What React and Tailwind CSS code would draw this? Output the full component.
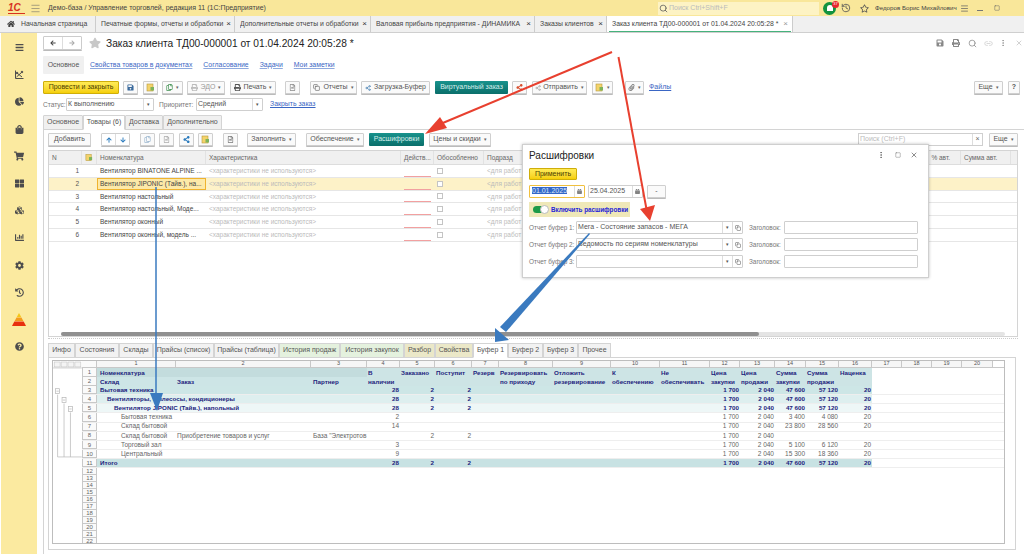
import React from "react";
import {
  FaBars, FaChartPie, FaShoppingBag, FaShoppingCart, FaThLarge, FaCubes, FaChartBar, FaCog, FaHistory,
  FaQuestionCircle, FaHome, FaStar, FaRegStar, FaPrint, FaSave, FaCalendarAlt, FaPaperclip, FaArrowUp, FaArrowDown,
  FaArrowLeft, FaArrowRight, FaShareAlt, FaRegCopy, FaRegFileAlt,
} from "react-icons/fa";
import { Search, Link2, MoreVertical, Share2, Copy, Square, X, History, Menu } from "lucide-react";

const Caret = () => <span className="ml-[3px] text-[5px] text-[#666]">▾</span>;

function Btn({ className = "", children }) {
  return (
    <div className={"h-[13px] shrink-0 flex items-center justify-center rounded-[1px] border border-[#cfcfcf] bg-[#fafafa] text-[7px] text-[#555] shadow-[0_1px_0_#bbb] " + className}>
      {children}
    </div>
  );
}

function DocIcon() {
  return (
    <svg width="9" height="9" viewBox="0 0 9 9">
      <rect x="1" y="1" width="6" height="7" fill="#f3d36b" stroke="#b89a3c" strokeWidth="0.6" />
      <rect x="4.5" y="4" width="3.5" height="3.5" fill="#7eb35a" />
    </svg>
  );
}

function TitleBar() {
  return (
    <div className="h-[16px] shrink-0 flex items-center bg-[#f9e79a] text-[7px] text-[#444] whitespace-nowrap">
      <span className="ml-[8px] w-[17px] text-[10px] leading-none font-bold italic text-[#d8321f] border-b border-[#d8321f]">1С</span>
      <Menu className="ml-[5px] text-[#666]" size={11} strokeWidth={1.2} />
      <span className="ml-[7px] w-[610px]">Демо-база / Управление торговлей, редакция 11 (1С:Предприятие)</span>
      <div className="w-[161px] h-[13px] flex items-center bg-[#fdf3c4] text-[#bbb]">
        <Search size={9} className="ml-[1px] mr-[1px] text-[#555]" />
        Поиск Ctrl+Shift+F
      </div>
      <div className="relative ml-[4px] w-[13px] h-[13px] rounded-full bg-[#12933f] flex items-center justify-center">
        <div className="w-[6px] h-[6px] rounded-t-full bg-white" />
        <div className="absolute -top-[1px] -right-[3px] w-[7px] h-[7px] rounded-full bg-[#e8262d] text-[4px] text-white flex items-center justify-center">37</div>
      </div>
      <History className="ml-[5px] text-[#555]" size={10} />
      <FaRegStar className="ml-[9px] text-[#555]" size={9} />
      <span className="ml-[6px] w-[82px] text-[6.2px]">Федоров Борис Михайлович</span>
      <Menu className="ml-[3px] text-[#666]" size={9} />
      <span className="ml-[8px] mt-[5px] w-[6px] border-t border-[#777]" />
      <Square className="ml-[11px] text-[#666]" size={6} strokeWidth={2} />
    </div>
  );
}

const topTabs = [
  { t: "Печатные формы, отчеты и обработки", w: "w-[139px]" },
  { t: "Дополнительные отчеты и обработки", w: "w-[136px]" },
  { t: "Валовая прибыль предприятия - ДИНАМИКА", w: "w-[164px]" },
  { t: "Заказы клиентов", w: "w-[72px]" },
];

function TabBar() {
  return (
    <div className="h-[17px] shrink-0 flex bg-[#f0f0f0] border-b border-[#cfcfcf] text-[6.85px] text-[#444]">
      <div className="w-[96px] flex items-center border-r border-[#ccc] whitespace-nowrap">
        <FaHome className="ml-[7px] mr-[6px] text-[#444]" size={8} />
        Начальная страница
      </div>
      {topTabs.map((tab) => (
        <div key={tab.t} className={"flex items-center pl-[5px] border-r border-[#ccc] whitespace-nowrap " + tab.w}>
          <span className="flex-1 overflow-hidden">{tab.t}</span>
          <span className="mr-[3px] text-[8px] leading-none text-[#333]">×</span>
        </div>
      ))}
      <div className="w-[186px] flex items-center pl-[5px] bg-white border-r border-[#ccc] whitespace-nowrap relative">
        <span className="flex-1">Заказ клиента ТД00-000001 от 01.04.2024 20:05:28 *</span>
        <span className="mr-[4px] text-[8px] leading-none text-[#999]">×</span>
        <div className="absolute left-[2px] right-[1px] bottom-[0px] h-[1px] bg-[#46b27c]" />
      </div>
    </div>
  );
}

function Sidebar() {
  const c = "text-[#4d4d4d]";
  return (
    <div className="w-[36px] shrink-0 ml-[1px] flex flex-col items-center bg-[#fbeaa0] pt-[1px]">
      {[
        <FaBars key="a" className={c} size={9} />,
        <svg key="b" width="10" height="10" viewBox="0 0 10 10" fill="none" stroke="#4d4d4d" strokeWidth="1">
          <path d="M1.5 0.5V8.5H9.5" />
          <path d="M2.5 7L7.5 2.5M3 3L8 7" />
          <circle cx="8" cy="2" r="0.8" fill="#4d4d4d" />
          <circle cx="3" cy="3" r="0.8" fill="#4d4d4d" />
        </svg>,
        <FaChartPie key="c" className={c} size={9} />,
        <FaShoppingBag key="d" className={c} size={9} />,
        <FaShoppingCart key="e" className={c} size={10} />,
        <FaThLarge key="f" className={c} size={9} />,
        <FaCubes key="g" className={c} size={9} />,
        <FaChartBar key="h" className={c} size={9} />,
        <FaCog key="i" className={c} size={9} />,
        <FaHistory key="j" className={c} size={9} />,
        <svg key="k" width="16" height="13" viewBox="0 0 16 13">
          <polygon points="8,0 10.2,4 5.8,4" fill="#f5c518" />
          <polygon points="5.5,4.6 10.5,4.6 12.3,8 3.7,8" fill="#f39a1d" />
          <polygon points="3.3,8.6 12.7,8.6 15,13 1,13" fill="#e8300f" />
        </svg>,
        <FaQuestionCircle key="l" className={c} size={9} />,
      ].map((icon, i) => (
        <div key={i} className="h-[27.2px] flex items-center justify-center">{icon}</div>
      ))}
    </div>
  );
}

function Header() {
  return (
    <div className="mt-[3px] h-[14px] flex items-center">
      <div className="w-[39px] h-[14px] flex rounded-[1px] border border-[#ccc] shadow-[0_1px_0_#bbb]">
        <div className="flex-1 flex items-center justify-center border-r border-[#ddd]"><FaArrowLeft size={6} className="text-[#444]" /></div>
        <div className="flex-1 flex items-center justify-center"><FaArrowRight size={6} className="text-[#aaa]" /></div>
      </div>
      <FaStar className="ml-[7px] text-[#c8c8c8]" size={12} />
      <h1 className="ml-[5px] mt-[1px] text-[10.2px] text-[#222] font-normal whitespace-nowrap">Заказ клиента ТД00-000001 от 01.04.2024 20:05:28 *</h1>
      <div className="ml-auto mr-[1px] flex items-center text-[#888]">
        <FaSave size={8} className="mr-[8px]" />
        <FaPrint size={8} className="mr-[8px]" />
        <Search size={9} className="mr-[7px]" />
        <Link2 size={9} className="mr-[6px] text-[#ccc]" />
        <MoreVertical size={8} className="mr-[8px]" />
        <X size={8} className="text-[#bbb]" />
      </div>
    </div>
  );
}

function LinksRow() {
  const link = "text-[#3a66c4] underline decoration-[#8fa9de]";
  return (
    <div className="mt-[6px] h-[18px] flex items-center text-[6.9px] whitespace-nowrap">
      <div className="w-[41px] h-[18px] flex items-center justify-center bg-[#f0f0f0] rounded-[1px] text-[#555]">Основное</div>
      <a className={"ml-[6px] " + link}>Свойства товаров в документах</a>
      <a className={"ml-[11px] " + link}>Согласование</a>
      <a className={"ml-[11px] " + link}>Задачи</a>
      <a className={"ml-[11px] " + link}>Мои заметки</a>
    </div>
  );
}

function CommandBar() {
  return (
    <div className="mt-[7px] h-[13px] flex items-center whitespace-nowrap">
      <div className="w-[76px] h-[13px] flex items-center justify-center rounded-[1px] border border-[#cfae0a] bg-linear-to-b from-[#ffeb55] to-[#f5cf00] text-[7px] text-[#4a3f00]">Провести и закрыть</div>
      <Btn className="ml-[4px] w-[15px]"><FaSave size={7} className="text-[#3b6a9c]" /></Btn>
      <Btn className="ml-[5px] w-[15px]"><DocIcon /></Btn>
      <Btn className="ml-[4px] w-[21px]"><FaRegCopy size={7} className="text-[#3f8f4f]" /><Caret /></Btn>
      <Btn className="ml-[4px] w-[38px] text-[#999]"><FaPrint size={7} className="mr-[3px] text-[#bbb]" />ЭДО<Caret /></Btn>
      <Btn className="ml-[5px] w-[46px]"><FaPrint size={7} className="mr-[3px] text-[#555]" />Печать<Caret /></Btn>
      <Btn className="ml-[9px] w-[15px]"><FaRegFileAlt size={7} className="text-[#888]" /></Btn>
      <Btn className="ml-[10px] w-[47px]"><Copy size={7} className="mr-[3px]" />Отчеты<Caret /></Btn>
      <Btn className="ml-[4px] w-[69px]"><Share2 size={6} className="mr-[3px] text-[#2d6ea8]" />Загрузка-Буфер</Btn>
      <div className="ml-[5px] w-[73px] h-[13px] flex items-center justify-center rounded-[1px] bg-linear-to-b from-[#18928c] to-[#0a6f6b] text-[7px] text-[#d6efec]">Виртуальный заказ</div>
      <Btn className="ml-[4px] w-[15px]"><FaShareAlt size={7} className="text-[#d8502f]" /></Btn>
      <Btn className="ml-[5px] w-[55px]"><Share2 size={6} className="mr-[2px] text-[#999]" />Отправить<Caret /></Btn>
      <Btn className="ml-[5px] w-[21px]"><DocIcon /><Caret /></Btn>
      <Btn className="ml-[12px] w-[19px]"><FaPaperclip size={7} className="text-[#888]" /><Caret /></Btn>
      <a className="ml-[5px] text-[7px] text-[#3a66c4] underline">Файлы</a>
      <Btn className="ml-auto w-[29px]">Еще<Caret /></Btn>
      <Btn className="ml-[5px] mr-[4px] w-[12px] font-bold">?</Btn>
    </div>
  );
}

function Select({ className = "", children }) {
  return (
    <div className={"h-[13px] shrink-0 flex items-center border border-[#cfcfcf] rounded-[1px] text-[6.9px] text-[#555] " + className}>
      <span className="flex-1 pl-[1px] overflow-hidden whitespace-nowrap">{children}</span>
      <span className="w-[10px] h-full flex items-center justify-center border-l border-[#ddd] text-[5px]">▾</span>
    </div>
  );
}

function StatusRow() {
  return (
    <div className="mt-[4px] h-[13px] flex items-center text-[6.6px] text-[#777] whitespace-nowrap">
      <span className="w-[23px]">Статус:</span>
      <Select className="w-[88px]">К выполнению</Select>
      <span className="ml-[5px] w-[37px]">Приоритет:</span>
      <Select className="w-[67px]">Средний</Select>
      <a className="ml-[7px] text-[6.9px] text-[#3a66c4] underline">Закрыть заказ</a>
    </div>
  );
}

const formTabs = [
  { t: "Основное", w: "w-[40px]" },
  { t: "Товары (6)", w: "w-[42px]", active: true },
  { t: "Доставка", w: "w-[38px]" },
  { t: "Дополнительно", w: "w-[59px]" },
];

function FormTabs() {
  return (
    <div className="mt-[4px] h-[15px] flex text-[7px] text-[#555] whitespace-nowrap">
      {formTabs.map((tab) => (
        <div key={tab.t} className={"flex items-center justify-center border border-[#d4d4d4] rounded-t-[1px] " + tab.w + (tab.active ? " bg-white border-b-white relative z-10" : " bg-[#f0f0f0]")}>
          {tab.t}
        </div>
      ))}
    </div>
  );
}

function TableToolbar() {
  return (
    <div className="mt-[3px] ml-[4px] h-[13px] flex items-center whitespace-nowrap">
      <Btn className="w-[43px]">Добавить</Btn>
      <div className="ml-[10px] w-[29px] h-[13px] flex rounded-[1px] border border-[#cfcfcf] shadow-[0_1px_0_#bbb]">
        <div className="flex-1 flex items-center justify-center border-r border-[#ddd]"><FaArrowUp size={6} className="text-[#2b7bbd]" /></div>
        <div className="flex-1 flex items-center justify-center"><FaArrowDown size={6} className="text-[#2b7bbd]" /></div>
      </div>
      <Btn className="ml-[10px] w-[15px]"><FaRegCopy size={7} className="text-[#9db8d0]" /></Btn>
      <Btn className="ml-[4px] w-[15px]"><FaRegFileAlt size={7} className="text-[#aaa]" /></Btn>
      <Btn className="ml-[5px] w-[15px]"><FaShareAlt size={7} className="text-[#2b7bbd]" /></Btn>
      <Btn className="ml-[4px] w-[15px] bg-[#f8eebc]"><DocIcon /></Btn>
      <Btn className="ml-[10px] w-[15px]"><FaRegFileAlt size={7} className="text-[#777]" /></Btn>
      <Btn className="ml-[9px] w-[49px]">Заполнить<Caret /></Btn>
      <Btn className="ml-[10px] w-[58px]">Обеспечение<Caret /></Btn>
      <div className="ml-[5px] w-[55px] h-[13px] flex items-center justify-center rounded-[1px] bg-linear-to-b from-[#18928c] to-[#0a6f6b] text-[7px] text-[#d6efec]">Расшифровки</div>
      <Btn className="ml-[5px] w-[62px]">Цены и скидки<Caret /></Btn>
      <div className="ml-[367px] w-[125px] h-[13px] flex items-center border border-[#cfcfcf] text-[7px] text-[#bbb] pl-[1px]">
        <span className="flex-1">Поиск (Ctrl+F)</span>
        <span className="w-[10px] h-full border-l border-[#ddd] flex items-center justify-center text-[#666]">×</span>
      </div>
      <Btn className="ml-[6px] w-[29px]">Еще<Caret /></Btn>
    </div>
  );
}

const goods = [
  "Вентилятор BINATONE ALPINE ...",
  "Вентилятор JIPONIC (Тайв.), на...",
  "Вентилятор настольный",
  "Вентилятор настольный, Моде...",
  "Вентилятор оконный",
  "Вентилятор оконный, модель ...",
];

function GoodsTable() {
  const head = "h-full flex items-center px-[3px] border-r border-[#e2e2e2] shrink-0 overflow-hidden whitespace-nowrap";
  return (
    <div className="mt-[4px] ml-[4px] w-[970px] h-[187px] flex flex-col border border-[#d4d4d4] text-[6.5px] text-[#555] overflow-hidden">
      <div className="h-[14px] shrink-0 flex bg-[#f0f0f0] border-b border-[#ddd] text-[#666]">
        <div className={head + " w-[33px]"}>N</div>
        <div className={head + " w-[15px] justify-center"}><DocIcon /></div>
        <div className={head + " w-[109px]"}>Номенклатура</div>
        <div className={head + " w-[195px]"}>Характеристика</div>
        <div className={head + " w-[33px]"}>Действ...</div>
        <div className={head + " w-[50px]"}>Обособленно</div>
        <div className={head + " w-[39px] border-r-0"}>Подразд</div>
        <div className={head + " w-[383px]"} />
        <div className={head + " w-[55px] justify-end pr-[10px]"}>% авт.</div>
        <div className={head + " w-[50px]"}>Сумма авт.</div>
        <div className={head + " flex-1"} />
      </div>
      {goods.map((name, i) => {
        const sel = i === 1;
        return (
          <div key={name} className={"h-[12.8px] shrink-0 flex items-center border-b border-[#e6e6e6] whitespace-nowrap " + (sel ? "bg-[#fdf2c8]" : "")}>
            <div className="w-[33px] pr-[3px] text-right">{i + 1}</div>
            <div className="w-[15px]" />
            <div className={"w-[109px] h-full flex items-center overflow-hidden text-[#444] " + (sel ? "px-[2px] border border-[#efb32e] bg-[#fde9a8]" : "px-[3px]")}>{name}</div>
            <div className="w-[195px] px-[3px] text-[#bbb]">&lt;характеристики не используются&gt;</div>
            <div className="w-[33px] h-full px-[3px] flex items-end"><div className="w-full border-b border-[#f2a0a0]" /></div>
            <div className="w-[50px] pl-[3px]"><div className="w-[6px] h-[6px] border border-[#c4c4c4] bg-white" /></div>
            <div className="w-[39px] pl-[3px] overflow-hidden text-[#bbb]">&lt;для работ</div>
          </div>
        );
      })}
      <div className="mt-auto h-[4px] mx-[12px] shrink-0 bg-[#e4e4e4] rounded-full">
        <div className="w-[698px] h-full bg-[#909090] rounded-full" />
      </div>
    </div>
  );
}

const bottomTabs = [
  { t: "Инфо", w: "w-[27px]", c: "bg-[#f2f2f2]" },
  { t: "Состояния", w: "w-[44px]", c: "bg-[#f2f2f2]" },
  { t: "Склады", w: "w-[34px]", c: "bg-[#f2f2f2]" },
  { t: "Прайсы (список)", w: "w-[61px]", c: "bg-[#f2f2f2]" },
  { t: "Прайсы (таблица)", w: "w-[65px]", c: "bg-[#f2f2f2]" },
  { t: "История продаж", w: "w-[61px]", c: "bg-[#e4f1de]" },
  { t: "История закупок", w: "w-[64px]", c: "bg-[#e4f1de]" },
  { t: "Разбор", w: "w-[31px]", c: "bg-[#ebe8c8]" },
  { t: "Свойства", w: "w-[38px]", c: "bg-[#ebe8c8]" },
  { t: "Буфер 1", w: "w-[35px]", c: "bg-white border-b-white relative z-10" },
  { t: "Буфер 2", w: "w-[35px]", c: "bg-[#f2f2f2]" },
  { t: "Буфер 3", w: "w-[35px]", c: "bg-[#f2f2f2]" },
  { t: "Прочее", w: "w-[33px]", c: "bg-[#f2f2f2]" },
];

const sheetCols = "grid grid-cols-[15px_79px_135px_56px_33px_35px_37px_27px_54px_58px_49px_50px_30px_35px_31px_33px_33px_30px_30px_30px_31px]";
const headers = [
  ["В", "наличии"], ["Заказано"], ["Поступит"], ["Резерв"], ["Резервировать", "по приходу"], ["Отложить", "резервирование"],
  ["К", "обеспечению"], ["Не", "обеспечивать"], ["Цена", "закупки"], ["Цена", "продажи"], ["Сумма", "закупки"], ["Сумма", "продажи"], ["Наценка"],
];

const total = ["1 700", "2 040", "47 600", "57 120", "20"];
const sheetRows = [
  { n: 3, label: "Бытовая техника", pad: "pl-[3px]", bg: "bg-[#cde6e6]", bold: true, q: ["28", "2", "2"], p: total },
  { n: 4, label: "Вентиляторы, пылесосы, кондиционеры", pad: "pl-[10px]", bg: "bg-[#deefef]", bold: true, q: ["28", "2", "2"], p: total },
  { n: 5, label: "Вентилятор JIPONIC (Тайв.), напольный", pad: "pl-[17px]", bg: "bg-[#eef7f7]", bold: true, q: ["28", "2", "2"], p: total },
  { n: 6, label: "Бытовая техника", pad: "pl-[24px]", q: ["2", "", ""], p: ["1 700", "2 040", "3 400", "4 080", "20"] },
  { n: 7, label: "Склад бытовой", pad: "pl-[24px]", q: ["14", "", ""], p: ["1 700", "2 040", "23 800", "28 560", "20"] },
  { n: 8, label: "Склад бытовой", order: "Приобретение товаров и услуг", partner: "База \"Электротов", pad: "pl-[24px]", q: ["", "2", "2"], p: ["1 700", "2 040", "", "", ""] },
  { n: 9, label: "Торговый зал", pad: "pl-[24px]", q: ["3", "", ""], p: ["1 700", "2 040", "5 100", "6 120", "20"] },
  { n: 10, label: "Центральный", pad: "pl-[24px]", q: ["9", "", ""], p: ["1 700", "2 040", "15 300", "18 360", "20"] },
  { n: 11, label: "Итого", pad: "pl-[3px]", bg: "bg-[#c8e2e3]", bold: true, q: ["28", "2", "2"], p: total },
];

const rowNum = "flex items-center justify-center border border-[#c8c8c8] border-t-0 bg-[#fafafa] font-normal text-[6px] text-[#666]";

function SheetRow({ row }) {
  const bg = row.bg || "bg-white";
  const text = row.bold ? "font-bold text-[6.25px] text-[#1c1c7c]" : "text-[6.5px] text-[#666]";
  const num = "flex items-center justify-end pr-[1px] whitespace-nowrap " + bg;
  return (
    <div className={sheetCols + " h-[9.17px] border-b border-[#eeeeee] leading-none " + text}>
      <div className={rowNum}>{row.n}</div>
      {row.order ? (
        <>
          <div className={"flex items-center whitespace-nowrap " + row.pad + " " + bg}>{row.label}</div>
          <div className={"flex items-center whitespace-nowrap pl-[1px] " + bg}>{row.order}</div>
          <div className={"flex items-center whitespace-nowrap overflow-hidden pl-[2px] " + bg}>{row.partner}</div>
        </>
      ) : (
        <div className={"col-span-3 flex items-center whitespace-nowrap " + row.pad + " " + bg}>{row.label}</div>
      )}
      {row.q.map((v, i) => <div key={i} className={num}>{v}</div>)}
      <div className={"col-span-5 " + bg} />
      {row.p.map((v, i) => <div key={i} className={num}>{v}</div>)}
    </div>
  );
}

function Sheet() {
  const cols = Array.from({ length: 20 }, (_, i) => i + 1);
  const spacer = Array.from({ length: 11 }, (_, i) => i + 12);
  return (
    <div className="mt-[2px] ml-[3px] w-[953px] h-[184px] flex border border-[#bdbdbd] overflow-hidden">
      <svg className="w-[29px] h-full shrink-0" viewBox="0 0 29 184">
        <g fill="#f4f4f4" stroke="#bbb" strokeWidth="0.5">
          <rect x="1" y="1" width="6" height="5" />
          <rect x="8" y="1" width="6" height="5" />
          <rect x="15" y="1" width="6" height="5" />
          <rect x="22" y="1" width="6" height="5" />
        </g>
        <g fill="none" stroke="#b5b5b5" strokeWidth="0.7">
          <path d="M0 7H29" />
          <path d="M4.5 34V97H29M11 43V97M17.5 52V97" />
          <rect x="2.5" y="28" width="4" height="5" fill="#fff" />
          <rect x="9" y="37" width="4" height="5" fill="#fff" />
          <rect x="15.5" y="46" width="4" height="5" fill="#fff" />
          <path d="M3.3 30.5H5.7M9.8 39.5H12.2M16.3 48.5H18.7" />
        </g>
      </svg>
      <div className="flex-1 min-w-0">
        <div className={sheetCols + " h-[7px] text-[5.5px] leading-none text-[#555] border-b border-[#c8c8c8]"}>
          <div className="border-r border-[#c8c8c8] bg-[#fafafa]" />
          {cols.map((c) => (
            <div key={c} className="flex items-center justify-center border-r border-[#c8c8c8] bg-[#f6f6f6]">{c}</div>
          ))}
        </div>
        <div className={sheetCols + " grid-rows-[9px_9px] text-[6.25px] leading-[9px] font-bold text-[#1c1c7c]"}>
          <div className={rowNum}>1</div>
          <div className="col-span-3 pl-[3px] bg-[#c3dcdd]">Номенклатура</div>
          {headers.map((h, i) => (
            <div key={i} className="row-span-2 pl-[1px] whitespace-nowrap overflow-hidden bg-[#cde4e5]">
              {h.map((line) => <div key={line}>{line}</div>)}
            </div>
          ))}
          <div className="row-span-2 col-span-4" />
          <div className={rowNum}>2</div>
          <div className="pl-[3px] bg-[#cde5e6]">Склад</div>
          <div className="pl-[1px] bg-[#cde5e6]">Заказ</div>
          <div className="pl-[2px] bg-[#cde5e6]">Партнер</div>
        </div>
        {sheetRows.map((row) => <SheetRow key={row.n} row={row} />)}
        {spacer.map((n) => (
          <div key={n} className={sheetCols + " h-[7px] leading-none"}>
            <div className={rowNum}>{n}</div>
          </div>
        ))}
      </div>
    </div>
  );
}

function BottomPanel() {
  return (
    <>
      <div className="mt-[1px] ml-[4px] mr-[6px] border-t border-dotted border-[#ccc]" />
      <div className="mt-[4px] ml-[4px] h-[15px] flex text-[7px] text-[#555] whitespace-nowrap">
        {bottomTabs.map((tab) => (
          <div key={tab.t} className={"flex items-center justify-center border border-[#d4d4d4] " + tab.w + " " + tab.c}>{tab.t}</div>
        ))}
      </div>
      <div className="ml-[4px] w-[968px] h-[193px] border border-[#d4d4d4] -mt-[1px]">
        <Sheet />
      </div>
    </>
  );
}

function Field({ className = "", children }) {
  return <div className={"h-[13px] shrink-0 flex items-center border border-[#cfcfcf] rounded-[1px] text-[7px] text-[#555] whitespace-nowrap " + className}>{children}</div>;
}

function BufferRow({ label, value }) {
  return (
    <div className="mt-[4px] h-[13px] flex items-center text-[6.4px] text-[#777] whitespace-nowrap">
      <span className="w-[47px]">{label}</span>
      <Field className="w-[167px]">
        <span className="flex-1 pl-[1px]">{value}</span>
        <span className="w-[10px] h-full flex items-center justify-center border-l border-[#ddd] text-[5px]">▾</span>
        <span className="w-[10px] h-full flex items-center justify-center border-l border-[#ddd]"><Copy size={6} /></span>
      </Field>
      <span className="ml-[6px] w-[35px]">Заголовок:</span>
      <Field className="w-[134px]" />
    </div>
  );
}

function Dialog() {
  return (
    <div className="absolute left-[522px] top-[144px] w-[407px] h-[134px] z-20 bg-white border border-[#cfcfcf] shadow-[0_0_3px_rgba(0,0,0,0.25)] px-[6px]">
      <div className="mt-[3px] h-[14px] flex items-center">
        <h2 className="text-[10px] font-normal text-[#222]">Расшифровки</h2>
        <MoreVertical className="ml-auto text-[#555]" size={8} />
        <Square className="ml-[10px] text-[#555]" size={6} strokeWidth={1.5} />
        <X className="ml-[9px] mr-[4px] text-[#555]" size={8} />
      </div>
      <div className="mt-[6px] w-[48px] h-[12px] flex items-center justify-center rounded-[1px] border border-[#cfae0a] bg-linear-to-b from-[#ffeb55] to-[#f5cf00] text-[7px] text-[#4a3f00]">Применить</div>
      <div className="mt-[5px] h-[13px] flex items-center text-[7px] text-[#555]">
        <div className="w-[56px] h-[13px] flex items-center border border-[#f0c040] rounded-[1px]">
          <span className="flex-1 pl-[2px]"><span className="bg-[#3367c8] text-[#dfe8f8]">01.01.2025</span></span>
          <span className="w-[10px] h-full flex items-center justify-center border-l border-[#ddd]"><FaCalendarAlt size={5} /></span>
        </div>
        <Field className="ml-[3px] w-[55px]">
          <span className="flex-1 pl-[1px]">25.04.2025</span>
          <span className="w-[10px] h-full flex items-center justify-center border-l border-[#ddd]"><FaCalendarAlt size={5} /></span>
        </Field>
        <Btn className="ml-[4px] w-[19px]">-</Btn>
      </div>
      <div className="mt-[4px] w-[101px] h-[15px] flex items-center bg-[#efe8b8] text-[6.3px] font-bold text-[#2424d8] whitespace-nowrap">
        <div className="ml-[4px] w-[15px] h-[7px] shrink-0 rounded-full bg-[#1d9a48] relative">
          <div className="absolute -right-[1px] -top-[1px] w-[9px] h-[9px] rounded-full bg-white border border-[#bbb]" />
        </div>
        <span className="ml-[3px]">Включить расшифровки</span>
      </div>
      <BufferRow label="Отчет буфер 1:" value="Мега - Состояние запасов - МЕГА" />
      <BufferRow label="Отчет буфер 2:" value="Ведомость по сериям номенклатуры" />
      <BufferRow label="Отчет буфер 3:" value="" />
    </div>
  );
}

function Arrows() {
  return (
    <svg className="absolute left-0 top-0 w-[1024px] h-[554px] z-30 pointer-events-none" viewBox="0 0 1024 554">
      <g fill="#e8402f" stroke="none">
        <path d="M612 52L438 125" stroke="#e8402f" strokeWidth="2" />
        <polygon points="425,134 440,117 447,128" />
        <path d="M618.5 57L647 212" stroke="#e8402f" strokeWidth="2" />
        <polygon points="650,221 640,209 655,205" />
      </g>
      <g fill="#3a7abf" stroke="none">
        <path d="M156 187V398" stroke="#3a7abf" strokeWidth="1.5" />
        <polygon points="157,411 150,393 163,393" />
        <polygon points="589,233 590,234 506,332 500,327" />
        <polygon points="495,342 495,328 509,340" />
      </g>
    </svg>
  );
}

export default function App() {
  return (
    <div className="relative w-[1024px] h-[554px] overflow-hidden flex flex-col bg-white font-['Liberation_Sans',sans-serif]">
      <TitleBar />
      <TabBar />
      <div className="flex-1 min-h-0 flex">
        <Sidebar />
        <main className="flex-1 min-w-0 pl-[6px] flex flex-col">
          <Header />
          <LinksRow />
          <CommandBar />
          <StatusRow />
          <FormTabs />
          <div className="-mt-[1px] border-t border-l border-[#d4d4d4] flex-1 flex flex-col min-h-0">
            <TableToolbar />
            <GoodsTable />
            <BottomPanel />
          </div>
        </main>
      </div>
      <Dialog />
      <Arrows />
    </div>
  );
}
